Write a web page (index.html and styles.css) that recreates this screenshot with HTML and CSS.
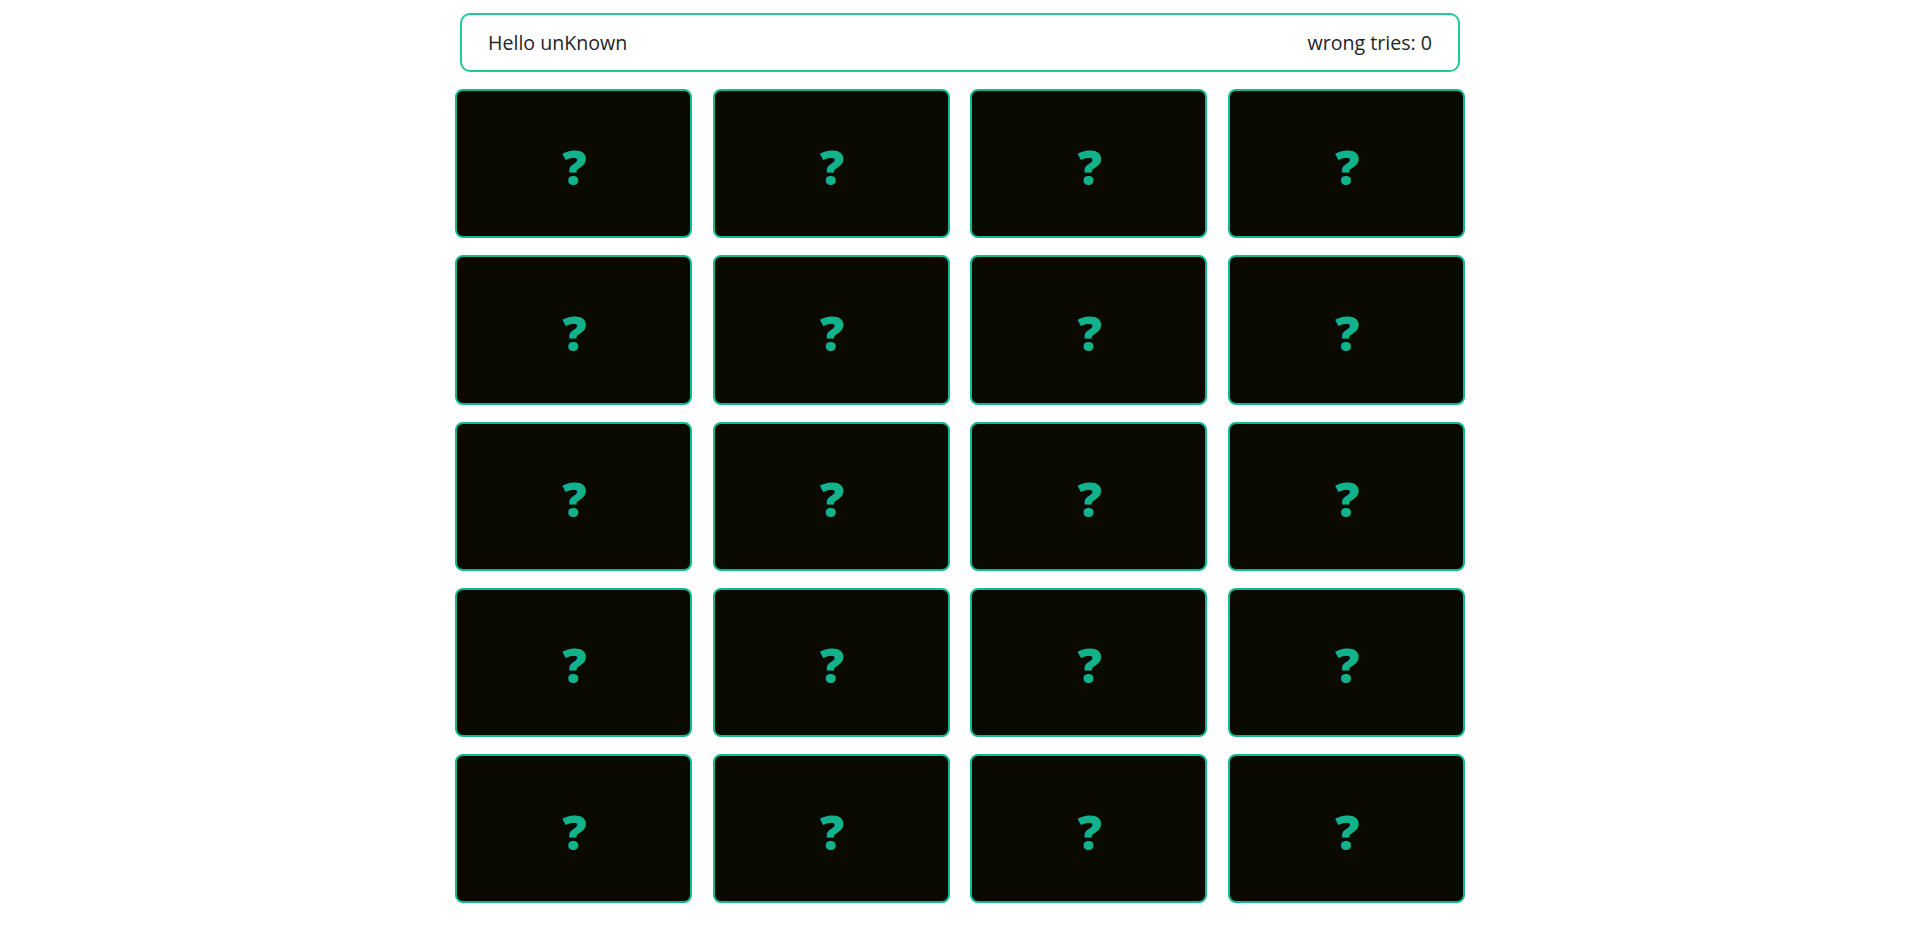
FILE: index.html
```html
<!DOCTYPE html>
<html lang="en">
<head>
<meta charset="utf-8">
<title>Memory</title>
<link rel="stylesheet" href="styles.css">
</head>
<body>
<div class="app">
  <div class="header">
    <span class="hello">Hello unKnown</span>
    <span class="tries">wrong tries: 0</span>
  </div>
  <div class="board">
    <div class="card"><span class="q">?</span></div>
    <div class="card"><span class="q">?</span></div>
    <div class="card"><span class="q">?</span></div>
    <div class="card"><span class="q">?</span></div>
    <div class="card"><span class="q">?</span></div>
    <div class="card"><span class="q">?</span></div>
    <div class="card"><span class="q">?</span></div>
    <div class="card"><span class="q">?</span></div>
    <div class="card"><span class="q">?</span></div>
    <div class="card"><span class="q">?</span></div>
    <div class="card"><span class="q">?</span></div>
    <div class="card"><span class="q">?</span></div>
    <div class="card"><span class="q">?</span></div>
    <div class="card"><span class="q">?</span></div>
    <div class="card"><span class="q">?</span></div>
    <div class="card"><span class="q">?</span></div>
    <div class="card"><span class="q">?</span></div>
    <div class="card"><span class="q">?</span></div>
    <div class="card"><span class="q">?</span></div>
    <div class="card"><span class="q">?</span></div>
  </div>
</div>
</body>
</html>
```

FILE: styles.css
```css
html, body {
  margin: 0;
  padding: 0;
  background: #ffffff;
}

body {
  font-family: "Open Sans", "Noto Sans", sans-serif;
  color: #212529;
}

.app {
  width: 1010px;
  margin: 0 auto;
  padding-top: 13px;
}

.header {
  box-sizing: border-box;
  height: 59px;
  margin: 0 5px;
  border: 2px solid #20c997;
  border-radius: 10px;
  display: flex;
  align-items: center;
  justify-content: space-between;
  padding: 0 26px;
  font-size: 19.6px;
}

.board {
  margin-top: 17px;
  display: grid;
  grid-template-columns: repeat(4, 1fr);
  column-gap: 20.67px;
  row-gap: 17px;
}

.card {
  box-sizing: border-box;
  height: 149.25px;
  background: #0a0a00;
  border: 2px solid #12b88e;
  border-radius: 8px;
  display: flex;
  align-items: center;
  justify-content: center;
}

.q {
  font-family: "Noto Sans", "DejaVu Sans", sans-serif;
  font-weight: 900;
  font-size: 48px;
  color: #12b38c;
  line-height: 1;
  padding-top: 6px;
  padding-left: 2px;
}
```
